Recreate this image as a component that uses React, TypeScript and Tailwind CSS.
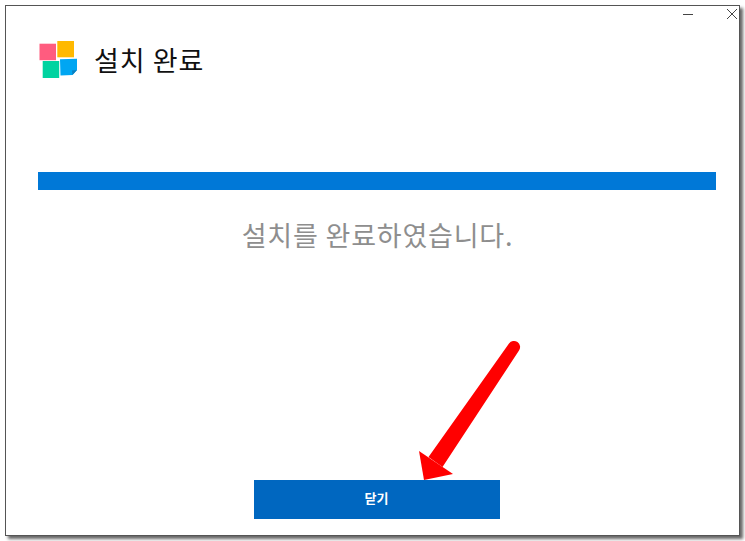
import React from "react";

const font = { fontFamily: '"Noto Sans CJK KR", "Liberation Sans", sans-serif' };

function Logo() {
  return (
    <svg width="38" height="38" viewBox="0 0 38 38" className="shrink-0">
      <rect x="0.500" y="3.700" width="16.500" height="16.500" fill="#ff5c7f" />
      <rect x="18.300" y="1" width="16.700" height="16.300" fill="#ffb900" />
      <rect x="3.700" y="21" width="16.500" height="17" fill="#00d3a0" />
      <path d="M21 19.300 L38 18.700 L38 30 L33.500 35 L21.500 35.500 Z" fill="#00a6f2" />
      <path d="M33.500 35 L33 30.500 L38 30 Z" fill="#0b7fc0" />
    </svg>
  );
}

export default function App() {
  return (
    <div className="relative w-[745px] h-[541px] overflow-hidden bg-white" style={font}>
      <div className="ml-[5px] mt-[5px] w-[735px] h-[531px] bg-white border border-[#555555] shadow-[3px_3px_3px_#666666] flex flex-col">
        <div className="flex justify-end h-[25px] pr-[2px] gap-[34px] pt-[2px] items-start">
          <div className="w-[10px] h-[1px] bg-[#444444] mt-[6px]" />
          <svg width="10" height="10" viewBox="0 0 10 10" className="mt-[1px]">
            <path d="M0 0 L10 10 M10 0 L0 10" stroke="#444444" strokeWidth="1" fill="none" />
          </svg>
        </div>
        <div className="flex items-center ml-[33px] mt-[8px] h-[40px] gap-[17px]">
          <Logo />
          <span className="text-[27px] leading-[40px] pt-[2px] text-[#111111] tracking-[1px]">설치 완료</span>
        </div>
        <div className="ml-[32px] mt-[93px] w-[678px] h-[18px] bg-[#0078d7]" />
        <div className="mt-[25px] h-[40px] text-center text-[27px] leading-[40px] text-[#8e8e8e] tracking-[0.8px] pl-[10px]">
          설치를 완료하였습니다.
        </div>
        <div className="flex-1" />
        <div className="flex justify-center pl-[8px] pb-[16px]">
          <button className="w-[246px] h-[39px] pb-[3px] bg-[#0067c0] text-white text-[13px] font-bold">닫기</button>
        </div>
      </div>
      <svg width="745" height="541" className="absolute left-0 top-0 pointer-events-none">
        <path
          d="M519 350.500 A6 6 0 0 0 509 343.500 L428.500 457 L442.500 467 Z"
          fill="#ff0000"
        />
        <polygon points="419,451 424,480 453,474" fill="#ff0000" />
      </svg>
    </div>
  );
}
